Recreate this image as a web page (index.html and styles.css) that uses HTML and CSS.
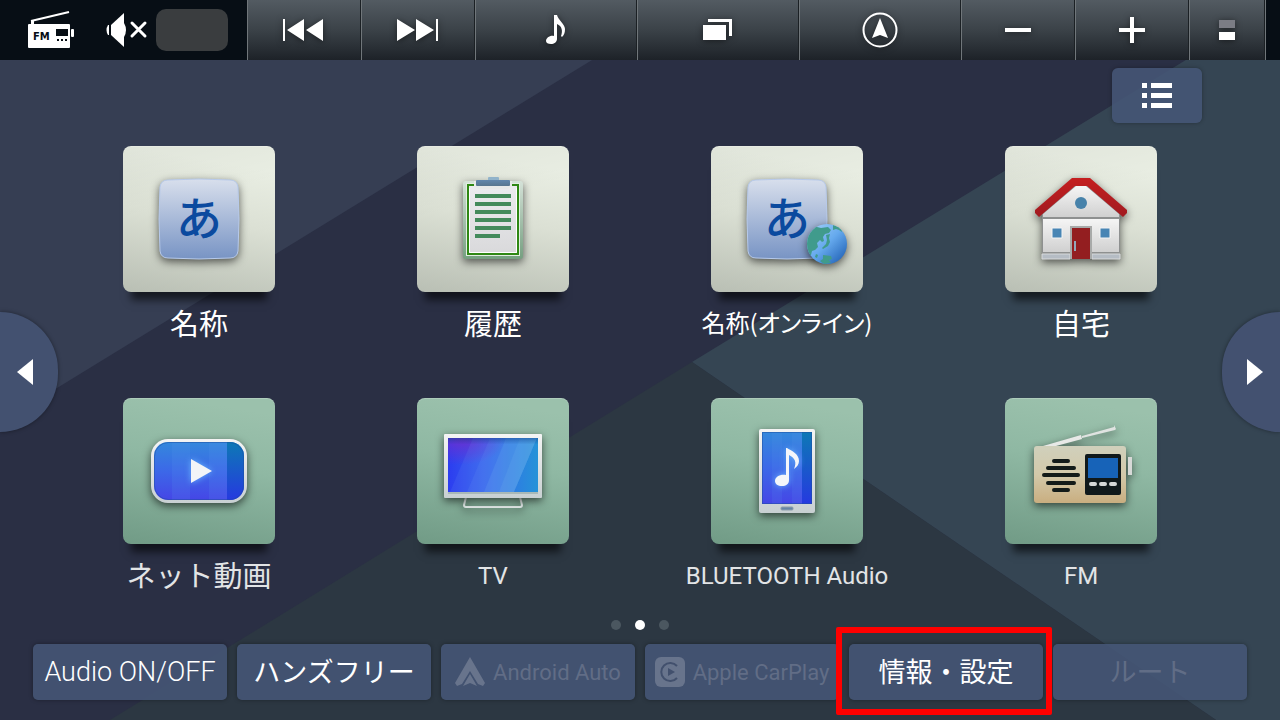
FILE: index.html
```html
<!DOCTYPE html>
<html lang="ja">
<head>
    <meta charset="UTF-8">
    <meta name="viewport" content="width=device-width, initial-scale=1.0">
    <title>メニュー</title>
    <link rel="stylesheet" href="styles.css">
</head>
<body>
    <svg class="backdrop" viewBox="0 0 1280 720" preserveAspectRatio="none" aria-hidden="true">
        <polygon points="0,0 690,0 0,423" fill="#363e53"/>
        <polygon points="1284,0 1280,0 1280,720 1216,720 692,362" fill="#354553"/>
        <polygon points="692,362 1216,720 110,720" fill="#2c3742"/>
    </svg>

    <header class="topbar">
        <div class="status">
            <svg width="46" height="38" viewBox="0 0 46 38">
                <path d="M3 10 L41 1" stroke="#fff" stroke-width="2" fill="none"/>
                <path d="M3 9h3v4H3z" fill="#fff"/>
                <rect x="0" y="13" width="42" height="24" rx="1" fill="#fff"/>
                <rect x="43" y="18" width="3" height="8" rx="1" fill="#fff"/>
                <rect x="28" y="18" width="12" height="7" fill="#070e15"/>
                <path d="M29 29h2m2 0h2m2 0h2" stroke="#070e15" stroke-width="2"/>
                <text class="fm-text" x="5" y="29">FM</text>
            </svg>
            <svg class="mute" width="42" height="34" viewBox="0 0 42 34">
                <path d="M18 0v34L5 22V12z" fill="#fff"/>
                <path d="M18 10q4 7 0 14z" fill="#fff"/>
                <path d="M3 12v10H2q-3-5 0-10z" fill="#fff"/>
                <path d="M26 10l13 13M39 10L26 23" stroke="#fff" stroke-width="3" stroke-linecap="round"/>
            </svg>
            <span class="status-box"></span>
        </div>
        <button type="button" aria-label="前へ">
            <svg width="42" height="22" viewBox="0 0 42 22" fill="#fff"><path d="M0 0h2v22H0zM21 0v22L4 11zM40 0v22L23 11z"/></svg>
        </button>
        <button type="button" aria-label="次へ">
            <svg width="42" height="22" viewBox="0 0 42 22" fill="#fff"><path d="M41 0h-2v22h2zM19 0v22l18-11zM0 0v22l18-11z"/></svg>
        </button>
        <button type="button" aria-label="オーディオ">
            <svg width="20" height="30" viewBox="0 0 20 30" fill="#fff"><path d="M9 0h2c1 5 8 9 8 14 0 4-1 6-3 8l-1-1c2-5 1-10-4-12v15c0 3-3 5-6 5S0 28 0 26c0-3 4-6 8-5V0z"/></svg>
        </button>
        <button type="button" aria-label="画面切替">
            <svg width="30" height="22" viewBox="0 0 30 22" fill="#fff"><path d="M0 6h23v15H0zM5 0h24v17h-3V3H5z"/></svg>
        </button>
        <button type="button" aria-label="現在地">
            <svg width="36" height="36" viewBox="0 0 36 36"><circle cx="18" cy="18" r="16.500" fill="none" stroke="#fff" stroke-width="2"/><path d="M18 6l8 20-8-3-8 3z" fill="#fff"/></svg>
        </button>
        <button type="button" aria-label="音量を下げる">
            <svg width="26" height="26" viewBox="0 0 26 26" fill="#fff"><path d="M0 11h26v4H0z"/></svg>
        </button>
        <button type="button" aria-label="音量を上げる">
            <svg width="26" height="26" viewBox="0 0 26 26" fill="#fff"><path d="M0 11h11V0h4v11h11v4H15v11h-4V15H0z"/></svg>
        </button>
        <button type="button" aria-label="表示切替">
            <svg width="16" height="20" viewBox="0 0 16 20"><path d="M0 0h16v8H0z" fill="#7b7d85"/><path d="M0 12h16v8H0z" fill="#fff"/></svg>
        </button>
        <div class="topbar-end"></div>
    </header>

    <main>
        <button type="button" class="list-btn" aria-label="リスト表示">
            <svg width="30" height="26" viewBox="0 0 30 26" fill="#fff"><path d="M0 0h5v5H0zM9 0h21v5H9zM0 10h5v5H0zM9 10h21v5H9zM0 20h5v5H0zM9 20h21v5H9z"/></svg>
        </button>

        <div class="menu">
            <button type="button" class="item">
                <span class="tile">
                    <svg viewBox="0 0 152 146">
                        <defs>
                            <linearGradient id="key" x1="0" y1="0" x2="0" y2="1"><stop offset="0" stop-color="#d8dfec"/><stop offset="1" stop-color="#7894c4"/></linearGradient>
                        </defs>
                        <path class="shadow" d="M45 34Q76 32 107 34Q114 34 115 41Q117 73 115 105Q114 112 107 112Q76 114 45 112Q38 112 37 105Q35 73 37 41Q38 34 45 34z" fill="url(#key)" stroke="#b6c9ea"/>
                        <text class="kana" x="76" y="89">あ</text>
                    </svg>
                </span>
                <span class="label">名称</span>
            </button>

            <button type="button" class="item">
                <span class="tile">
                    <svg viewBox="0 0 152 146">
                        <defs>
                            <linearGradient id="board" x1="0" y1="0" x2="0" y2="1"><stop offset="0" stop-color="#d5e2d8"/><stop offset="1" stop-color="#759f80"/></linearGradient>
                            <linearGradient id="clip" x1="0" y1="0" x2="0" y2="1"><stop offset="0" stop-color="#6287ad"/><stop offset="1" stop-color="#58768f"/></linearGradient>
                            <linearGradient id="paper" x1="0" y1="0" x2="0" y2="1"><stop offset="0" stop-color="#ececef"/><stop offset="1" stop-color="#d9d9db"/></linearGradient>
                        </defs>
                        <rect class="shadow" x="46" y="35" width="60" height="78" rx="3" fill="url(#board)"/>
                        <rect x="49.500" y="37.500" width="53" height="72" fill="none" stroke="#e2eee2"/>
                        <rect x="51" y="39" width="50" height="69" fill="url(#paper)" stroke="#2f8814" stroke-width="2"/>
                        <path d="M57 35h38v5l-4 3H61l-4-3z" fill="#e8eae9"/>
                        <path d="M52.500 106.500V42M52.500 106.500h47V42" stroke="#fff" fill="none"/>
                        <rect x="71" y="31" width="11" height="4" rx="1" fill="#91b3ca"/>
                        <rect x="59" y="34" width="34" height="6" rx="1" fill="url(#clip)"/>
                        <path d="M58 50h36M58 58h36M58 66h36M58 74h36M58 82h36M58 90h25" stroke="#438a5b" stroke-width="4"/>
                    </svg>
                </span>
                <span class="label">履歴</span>
            </button>

            <button type="button" class="item">
                <span class="tile">
                    <svg viewBox="0 0 152 146">
                        <defs>
                            <linearGradient id="globe" x1="0" y1="0" x2="1" y2="1"><stop offset="0" stop-color="#a8d4fa"/><stop offset=".5" stop-color="#65a9ed"/><stop offset="1" stop-color="#1757ad"/></linearGradient>
                            <clipPath id="globeClip"><circle cx="116" cy="98" r="20"/></clipPath>
                        </defs>
                        <path class="shadow" d="M45 34Q76 32 107 34Q114 34 115 41Q117 73 115 105Q114 112 107 112Q76 114 45 112Q38 112 37 105Q35 73 37 41Q38 34 45 34z" fill="url(#key)" stroke="#b6c9ea"/>
                        <text class="kana" x="76" y="89">あ</text>
                        <circle class="shadow" cx="116" cy="98" r="20" fill="url(#globe)"/>
                        <g clip-path="url(#globeClip)" fill="#409b8c">
                            <path d="M94 83l8-3 8 2 7-1 3 3-2 3-4 1-2 3 1 4-2 1-2-2-3 3 1 4-3 3-3 1-1 4-4 2-5-5z"/>
                            <path d="M115 89l4-1-1 4 1 4-2 4-5 3-1-1 4-4 1-4z"/>
                            <path d="M122 79l8 3 1 4-3-2-3-1-3 1zM112 109l8 1 1 3-3 1 2 3-7 1-4-3 3-2zM105 108l2 1-1 3-2-1z"/>
                        </g>
                    </svg>
                </span>
                <span class="label label-small">名称(オンライン)</span>
            </button>

            <button type="button" class="item">
                <span class="tile">
                    <svg viewBox="0 0 152 146">
                        <defs>
                            <linearGradient id="wall" x1="0" y1="0" x2="0" y2="1"><stop offset="0" stop-color="#f5f5f5"/><stop offset="1" stop-color="#d0d0d0"/></linearGradient>
                            <linearGradient id="roof" x1="0" y1="0" x2="0" y2="1"><stop offset="0" stop-color="#c41f20"/><stop offset="1" stop-color="#a11a20"/></linearGradient>
                        </defs>
                        <g class="shadow">
                            <path d="M71 38h10l34 29v46H37V67z" fill="#8e9090"/>
                            <path d="M71 40h10l33 28v3H38v-3z" fill="url(#wall)"/>
                            <path d="M38 73h76v33H87V80H65v26H38z" fill="url(#wall)"/>
                            <path d="M37 108h28v5H37zM87 108h28v5H87z" fill="#b5bcc4" stroke="#d8dadb"/>
                            <path d="M67 32h18l37 32v3l-4 4L82 40H70L34 71l-4-4v-3z" fill="url(#roof)"/>
                        </g>
                        <path d="M65 80h22v33h-2V82H67v31h-2z" fill="#a8aaa9"/>
                        <path d="M67 82h18v31H67z" fill="#931e20"/>
                        <path d="M69 95h2v10h-2z" fill="#93a9bb"/>
                        <circle cx="76" cy="57" r="6" fill="#4782aa"/>
                        <path d="M47 82h10v10H47zM95 82h10v10H95z" fill="#4885b4" stroke="#f4f4f4"/>
                    </svg>
                </span>
                <span class="label">自宅</span>
            </button>

            <button type="button" class="item av">
                <span class="tile">
                    <svg viewBox="0 0 152 146">
                        <defs>
                            <linearGradient id="movie" x1="0" y1="0" x2="0" y2="1"><stop offset="0" stop-color="#3488dc"/><stop offset=".5" stop-color="#3c68e8"/><stop offset="1" stop-color="#4546e6"/></linearGradient>
                            <linearGradient id="movieEdge" x1="0" y1="0" x2="0" y2="1"><stop offset="0" stop-color="#0d79b5"/><stop offset="1" stop-color="#2639e0"/></linearGradient>
                            <linearGradient id="frame" x1="0" y1="0" x2="0" y2="1"><stop offset="0" stop-color="#f4f4f4"/><stop offset="1" stop-color="#c8d0d2"/></linearGradient>
                            <clipPath id="movieClip"><rect x="31" y="44" width="90" height="58" rx="14"/></clipPath>
                        </defs>
                        <rect class="shadow" x="28" y="41" width="96" height="64" rx="17" fill="url(#frame)"/>
                        <g clip-path="url(#movieClip)">
                            <rect x="31" y="44" width="90" height="58" fill="url(#movie)"/>
                            <path d="M49 44h18v58H49zM86 44h18v58H86z" fill="#5f9df0" opacity=".15"/>
                            <rect x="104" y="44" width="17" height="58" fill="url(#movieEdge)"/>
                        </g>
                        <rect x="31.500" y="44.500" width="89" height="57" rx="14" fill="none" stroke="#1d4d9d" opacity=".5"/>
                        <path class="glow" d="M68 61l21 12-21 12z" fill="#f2f4f7"/>
                    </svg>
                </span>
                <span class="label">ネット動画</span>
            </button>

            <button type="button" class="item av">
                <span class="tile">
                    <svg viewBox="0 0 152 146">
                        <defs>
                            <linearGradient id="tv" x1="0" y1="0" x2="1" y2="0"><stop offset="0" stop-color="#2c3df0"/><stop offset=".4" stop-color="#3763ee"/><stop offset="1" stop-color="#2593d8"/></linearGradient>
                            <radialGradient id="tvViolet" cx=".15" cy="0" r=".5"><stop offset="0" stop-color="#6a2fd0"/><stop offset="1" stop-color="#6a2fd0" stop-opacity="0"/></radialGradient>
                            <linearGradient id="tvShade" x1="0" y1="0" x2="0" y2="1"><stop offset="0" stop-color="#10408c" stop-opacity=".5"/><stop offset=".12" stop-color="#10408c" stop-opacity="0"/></linearGradient>
                        </defs>
                        <path class="shadow" d="M49 99l-2 8q0 2 2 2h54q2 0 2-2l-2-8" fill="none" stroke="#e1e8e7" stroke-width="2"/>
                        <rect class="shadow" x="27" y="36" width="98" height="64" rx="1" fill="url(#frame)"/>
                        <rect x="31" y="40" width="90" height="54" fill="url(#tv)"/>
                        <rect x="31" y="40" width="90" height="54" fill="url(#tvViolet)"/>
                        <path d="M56 40h64L97 94H33z" fill="#80b5f2" opacity=".1"/>
                        <path d="M73 40h47L97 94H50z" fill="#80b5f2" opacity=".1"/>
                        <path d="M89 40h31L97 94H67z" fill="#80c5f2" opacity=".15"/>
                        <path d="M103 40h17L97 94H82z" fill="#80c5f2" opacity=".12"/>
                        <rect x="31" y="40" width="90" height="54" fill="url(#tvShade)"/>
                        <path d="M31 95h90" stroke="#a9b9b7" stroke-width="2"/>
                    </svg>
                </span>
                <span class="label label-latin">TV</span>
            </button>

            <button type="button" class="item av">
                <span class="tile">
                    <svg viewBox="0 0 152 146">
                        <rect class="shadow" x="48" y="31" width="56" height="84" rx="2" fill="url(#frame)"/>
                        <rect x="51" y="34" width="50" height="72" fill="url(#movie)"/>
                        <path d="M61 34h10v72H61zM81 34h10v72H81z" fill="#5f9df0" opacity=".12"/>
                        <rect x="91" y="34" width="10" height="72" fill="url(#movieEdge)"/>
                        <rect x="51.500" y="34.500" width="49" height="71" fill="none" stroke="#1d4d9d" opacity=".5"/>
                        <rect x="70" y="109" width="12" height="3" rx="1" fill="#6685a5" stroke="#8d9dab"/>
                        <path class="glow" d="M75 50h1c5 3 12 6 12 13 0 3-2 6-5 8 3-7 1-11-5-14v25c0 4-3 6-7 6s-7-2-7-5c0-4 5-7 11-6z" fill="#f4f6fa"/>
                    </svg>
                </span>
                <span class="label label-latin">BLUETOOTH Audio</span>
            </button>

            <button type="button" class="item av">
                <span class="tile">
                    <svg viewBox="0 0 152 146">
                        <defs>
                            <linearGradient id="radio" x1="0" y1="0" x2="0" y2="1"><stop offset="0" stop-color="#d0d0bc"/><stop offset=".5" stop-color="#d3c9aa"/><stop offset="1" stop-color="#c9ae80"/></linearGradient>
                        </defs>
                        <g class="shadow">
                            <path d="M38 48l38-11 1 4-26 7z" fill="#e8e9e7"/>
                            <path d="M77 38l32-9v-2l2 4-1 1-33 8z" fill="#e0e3e1"/>
                            <rect x="123" y="59" width="4" height="18" fill="#d7d9d7"/>
                            <rect x="29" y="48" width="92" height="57" rx="3" fill="url(#radio)"/>
                        </g>
                        <path d="M49 63h14M43 70h26M39 77h34M43 85h26M49 92h14" stroke="#131b19" stroke-width="4" stroke-linecap="round"/>
                        <rect x="80" y="56" width="36" height="41" rx="2" fill="#10191b"/>
                        <rect x="83" y="60" width="30" height="20" fill="#1763b8"/>
                        <path d="M86 86h4M96 86h4M106 86h4" stroke="#d4d7d6" stroke-width="4" stroke-linecap="round"/>
                    </svg>
                </span>
                <span class="label label-latin">FM</span>
            </button>
        </div>

        <div class="dots">
            <span></span>
            <span class="active"></span>
            <span></span>
        </div>

        <nav class="shortcuts">
            <button type="button" class="latin">Audio ON/OFF</button>
            <button type="button">ハンズフリー</button>
            <button type="button" class="latin link" disabled>
                <svg width="30" height="30" viewBox="0 0 30 30" fill="#68748c"><path d="M15 0l15 26-2 3-5-2-8-13-8 13-5 2-2-3z"/><path d="M15 17l7 12-7-3-7 3z"/></svg>
                Android Auto
            </button>
            <button type="button" class="latin link" disabled>
                <svg width="30" height="30" viewBox="0 0 30 30"><rect width="30" height="30" rx="6" fill="#68748c"/><path d="M22 9a9 9 0 1 0 0 12" fill="none" stroke="#42506d" stroke-width="2"/><path d="M13 11l7 4-7 4z" fill="#42506d"/></svg>
                Apple CarPlay
            </button>
            <button type="button" class="selected">情報・設定</button>
            <button type="button" disabled>ルート</button>
        </nav>

        <button type="button" class="pager prev" aria-label="前のページ">
            <svg width="16" height="26" viewBox="0 0 16 26"><path d="M16 0v26L0 13z" fill="#fff"/></svg>
        </button>
        <button type="button" class="pager next" aria-label="次のページ">
            <svg width="16" height="26" viewBox="0 0 16 26"><path d="M0 0v26l16-13z" fill="#fff"/></svg>
        </button>
    </main>
</body>
</html>
```
FILE: styles.css
```css
* {
    box-sizing: border-box;
}
body {
    position: relative;
    display: flex;
    flex-direction: column;
    min-height: 100vh;
    margin: 0;
    overflow-x: hidden;
    background-color: #2a2f44;
    color: #fff;
    font-family: "Noto Sans CJK JP", sans-serif;
}
button {
    margin: 0;
    padding: 0;
    border: none;
    background: none;
    color: inherit;
    font: inherit;
    cursor: pointer;
}
svg {
    display: block;
}
.backdrop {
    position: absolute;
    inset: 0;
    z-index: -1;
    width: 100%;
    height: 100%;
}

/* top bar */
.topbar {
    display: grid;
    grid-template-columns: 247fr 114fr 114fr 162fr 162fr 162fr 114fr 114fr 76fr 15fr;
    height: 60px;
    background-color: #070e15;
}
.topbar button {
    display: flex;
    justify-content: center;
    align-items: center;
    border-left: 1px solid #70767a;
    border-right: 1px solid #1b2024;
    background: linear-gradient(#535b62, #3b4248 50%, #1d2228);
}
.topbar button svg {
    filter: drop-shadow(0 1px 3px rgba(0, 0, 0, 0.5));
}
.topbar-end {
    border-left: 1px solid #70767a;
}
.status {
    display: flex;
    align-items: center;
    padding-left: 28px;
}
.status .mute {
    margin: 0 8px 0 32px;
}
.status-box {
    width: 72px;
    height: 42px;
    border-radius: 10px;
    background-color: #3a3d3f;
}
.fm-text {
    fill: #070e15;
    font: bold 10px "DejaVu Sans", sans-serif;
}

/* main menu */
main {
    position: relative;
    display: flex;
    flex: 1;
    flex-direction: column;
    padding: 8px 0 20px;
}
.list-btn {
    display: flex;
    justify-content: center;
    align-items: center;
    align-self: flex-end;
    width: 90px;
    height: 55px;
    margin-right: 78px;
    border-radius: 6px;
    background-color: rgba(70, 86, 118, 0.88);
    box-shadow: 0 0 4px rgba(0, 0, 0, 0.3);
}
.menu {
    display: grid;
    grid-template-columns: repeat(4, 1fr);
    row-gap: 42px;
    padding: 23px 52px 0;
}
.item {
    display: flex;
    flex-direction: column;
    align-items: center;
    height: 210px;
}
.tile {
    width: 152px;
    height: 146px;
    border-radius: 8px;
    background: linear-gradient(165deg, rgba(0, 0, 0, 0.04), rgba(255, 255, 255, 0) 40%), linear-gradient(190deg, #e9eee3 15%, #dbe0d4 50%, #b9bfb4);
    box-shadow: inset 0 1px 0 rgba(255, 255, 255, 0.2), 0 16px 8px -8px rgba(0, 0, 0, 0.6);
}
.av .tile {
    background: linear-gradient(190deg, #9bc1ac 10%, #8fb8a3 45%, #719b86);
}
.tile svg {
    width: 100%;
    height: 100%;
}
.shadow {
    filter: drop-shadow(0 3px 4px rgba(0, 0, 0, 0.6));
}
.glow {
    filter: drop-shadow(0 0 3px rgba(110, 190, 255, 0.9));
}
.kana {
    fill: #0b4a9f;
    font: 500 46px "Noto Sans CJK JP", sans-serif;
    text-anchor: middle;
}
.label {
    height: 64px;
    font-size: 29px;
    line-height: 60px;
    white-space: nowrap;
}
.label-small {
    font-size: 24px;
    font-feature-settings: "palt";
}
.label-latin {
    font-family: Roboto, sans-serif;
    font-size: 24px;
    line-height: 64px;
}
.av .label {
    color: #e2e4e6;
}

/* page dots */
.dots {
    display: flex;
    justify-content: center;
    gap: 14px;
    margin: 12px 0 14px;
}
.dots span {
    width: 10px;
    height: 10px;
    border-radius: 50%;
    background-color: #4b5760;
}
.dots .active {
    background-color: #fff;
}

/* bottom shortcuts */
.shortcuts {
    display: grid;
    grid-template-columns: repeat(6, minmax(0, 1fr));
    gap: 10px;
    margin-top: auto;
    padding: 0 33px;
}
.shortcuts button {
    display: flex;
    justify-content: center;
    align-items: center;
    gap: 8px;
    height: 56px;
    padding-bottom: 4px;
    border-radius: 5px;
    background-color: rgba(70, 86, 118, 0.88);
    box-shadow: 0 0 4px rgba(0, 0, 0, 0.35);
    font-size: 27px;
    white-space: nowrap;
}
.shortcuts .latin {
    padding-bottom: 0;
    font-family: Roboto, sans-serif;
    font-weight: 300;
}
.shortcuts .link {
    font-size: 22px;
    font-weight: 400;
}
.shortcuts button:disabled {
    color: #616d86;
    cursor: default;
}
.shortcuts .selected {
    position: relative;
    z-index: 1;
}
.shortcuts .selected::after {
    content: "";
    position: absolute;
    inset: -17px -9px -15px -13px;
    border: 6px solid #f00;
    border-radius: 2px;
}

/* page arrows on the screen edges */
.pager {
    position: absolute;
    top: 252px;
    display: flex;
    align-items: center;
    width: 58px;
    height: 120px;
    background-color: #435170;
    box-shadow: 0 0 4px rgba(0, 0, 0, 0.4);
}
.prev {
    left: 0;
    padding-left: 17px;
    border-radius: 0 60px 60px 0;
}
.next {
    right: 0;
    justify-content: flex-end;
    padding-right: 17px;
    border-radius: 60px 0 0 60px;
}
```
